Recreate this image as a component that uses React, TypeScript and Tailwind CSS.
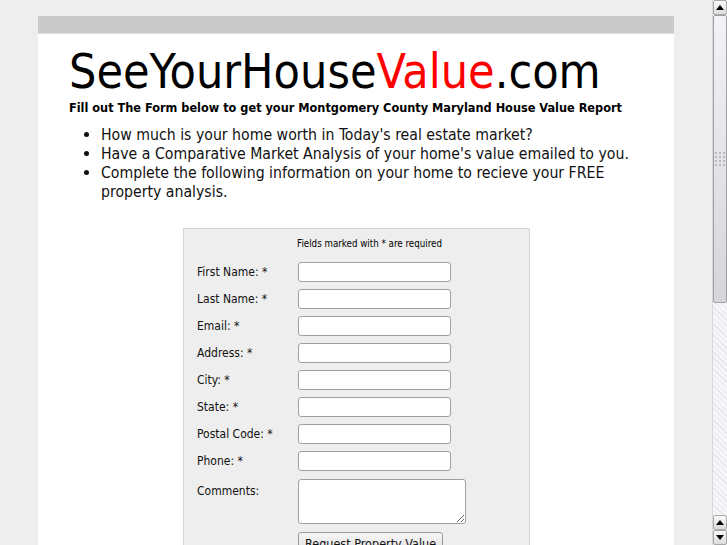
import React from "react";

const fields = [
  "First Name: *",
  "Last Name: *",
  "Email: *",
  "Address: *",
  "City: *",
  "State: *",
  "Postal Code: *",
  "Phone: *",
];

function Scrollbar() {
  return (
    <div className="w-[15px] h-full flex flex-col bg-[#f4f4f6] border-l border-[#d8d8d8]">
      <div className="h-[15px] shrink-0 flex items-center justify-center border border-[#a8a8a8] rounded-[2px] bg-gradient-to-b from-[#fafafa] to-[#dcdcdc]">
        <div className="w-0 h-0 border-l-[4px] border-r-[4px] border-b-[5px] border-l-transparent border-r-transparent border-b-black" />
      </div>
      <div className="h-[288px] shrink-0 border border-[#a0a0a0] rounded-[2px] bg-gradient-to-b from-[#f2f3f8] to-[#d5d6dc] flex items-center justify-center">
        <div className="grid grid-cols-3 gap-[2px]">
          {Array.from({ length: 12 }).map((_, i) => (
            <div key={i} className="w-[2px] h-[2px] bg-[#b8b9c0]" />
          ))}
        </div>
      </div>
      <div className="flex-1 bg-[repeating-linear-gradient(45deg,#f6f6f8_0px,#f6f6f8_3px,#e6e6ea_3px,#e6e6ea_4px)]" />
      <div className="h-[15px] shrink-0 flex items-center justify-center border border-[#a8a8a8] rounded-[2px] bg-gradient-to-b from-[#fafafa] to-[#dcdcdc]">
        <div className="w-0 h-0 border-l-[4px] border-r-[4px] border-b-[5px] border-l-transparent border-r-transparent border-b-black" />
      </div>
      <div className="h-[15px] shrink-0 flex items-center justify-center border border-[#a8a8a8] rounded-[2px] bg-gradient-to-b from-[#fafafa] to-[#dcdcdc]">
        <div className="w-0 h-0 border-l-[4px] border-r-[4px] border-t-[5px] border-l-transparent border-r-transparent border-t-black" />
      </div>
    </div>
  );
}

export default function App() {
  return (
    <div className="h-[545px] w-[727px] overflow-hidden flex bg-[#eeeeee] font-['DejaVu_Sans_Condensed','DejaVu_Sans',sans-serif]">
      <div className="flex-1 pt-4 flex justify-center overflow-hidden">
        <div className="w-[636px] flex flex-col">
          {/* top bar */}
          <div className="h-[18px] shrink-0 bg-[#cacaca] border-b border-[#dedede]" />

          {/* content */}
          <div className="bg-white flex-1 shrink-0 pl-[31px] pt-[9px]">
            <h1 className="text-[48px] leading-[56px] text-black">
              SeeYourHouse<span className="text-[#ff0000]">Value</span>.com
            </h1>
            <p className="text-[12.6px] font-bold text-black leading-[18px]">
              Fill out The Form below to get your Montgomery County Maryland House Value Report
            </p>

            <ul className="list-disc pl-[32px] mt-[8px] text-[15.7px] leading-[19px] text-[#111] w-[585px]">
              <li>How much is your home worth in Today's real estate market?</li>
              <li>Have a Comparative Market Analysis of your home's value emailed to you.</li>
              <li>Complete the following information on your home to recieve your FREE property analysis.</li>
            </ul>

            {/* form */}
            <div className="ml-[114px] mt-[27px] w-[347px] bg-[#eeeeee] border border-[#d4d4d4] pt-[9px] pl-[13px] pr-[14px] pb-4">
              <p className="text-[9.7px] text-center text-black leading-[12px] mb-[12px] pl-[27px]">
                Fields marked with * are required
              </p>
              <div className="flex flex-col gap-[7px]">
                {fields.map((f) => (
                  <div key={f} className="flex items-center h-[20px]">
                    <label className="w-[101px] text-[12px] text-[#111]">{f}</label>
                    <input
                      type="text"
                      className="w-[153px] h-[20px] bg-white border border-[#a0a0a0] rounded-[3px]"
                    />
                  </div>
                ))}
                <div className="flex items-start mt-[1px]">
                  <label className="w-[101px] text-[12px] text-[#111] pt-[3px]">Comments:</label>
                  <textarea className="w-[168px] h-[45px] bg-white border border-[#a0a0a0] rounded-[3px]" />
                </div>
                <div className="flex pl-[101px] mt-[1px]">
                  <button className="h-[24px] px-[6px] text-[12.5px] text-[#111] border border-[#9a9a9a] rounded-[3px] bg-gradient-to-b from-[#f6f6f6] to-[#dcdcdc]">
                    Request Property Value
                  </button>
                </div>
              </div>
            </div>
          </div>
        </div>
      </div>
      <Scrollbar />
    </div>
  );
}
